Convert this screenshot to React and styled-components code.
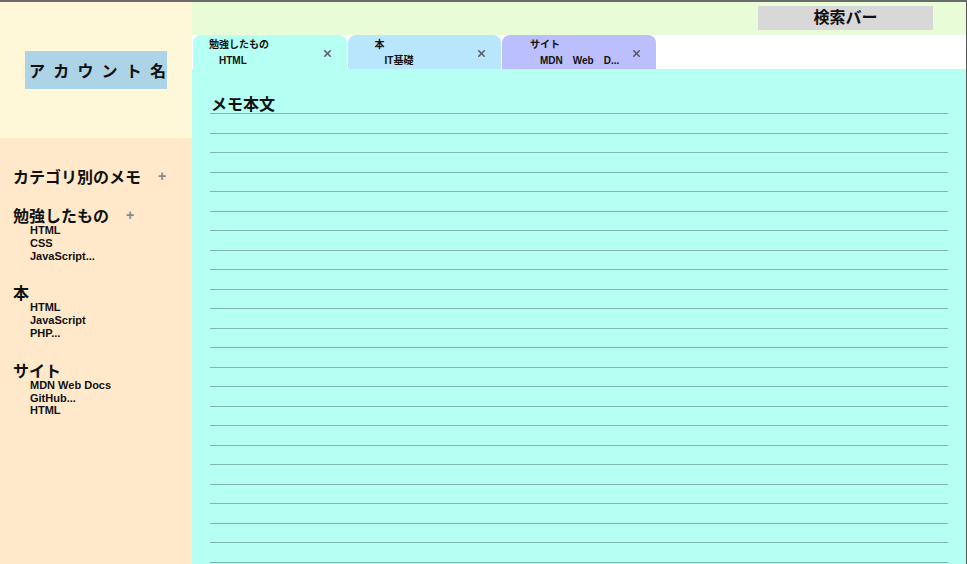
import React from "react";
import styled, { createGlobalStyle } from "styled-components";
import { X } from "lucide-react";

const GlobalStyle = createGlobalStyle`
  html, body, #root {
    height: 100%;
    margin: 0;
  }
  body {
    font-family: "Liberation Sans", "Noto Sans CJK JP", sans-serif;
    color: #111;
  }
`;

const tabs = [
  { title: "勉強したもの", sub: "HTML", color: "#b5fff3", inset: 16 },
  { title: "本", sub: "IT基礎", color: "#b9e6fd", inset: 27 },
  { title: "サイト", sub: "MDN　Web　D...", color: "#bbbffd", inset: 28 },
];

const categories = [
  { name: "勉強したもの", plus: true, items: ["HTML", "CSS", "JavaScript..."] },
  { name: "本", items: ["HTML", "JavaScript", "PHP..."] },
  { name: "サイト", items: ["MDN Web Docs", "GitHub...", "HTML"] },
];

const App = () => {
  const lines = Array.from({ length: 24 });

  return (
    <>
      <GlobalStyle />
      <Layout>
        <Sidebar>
          <Account>
            <AccountName>
              {"アカウント名".split("").map((ch, i) => (
                <span key={i}>{ch}</span>
              ))}
            </AccountName>
          </Account>
          <Categories>
            <Heading>
              カテゴリ別のメモ<Plus>+</Plus>
            </Heading>
            {categories.map((c) => (
              <Group key={c.name}>
                <Heading>
                  {c.name}
                  {c.plus && <Plus>+</Plus>}
                </Heading>
                {c.items.map((item) => (
                  <Item key={item}>{item}</Item>
                ))}
              </Group>
            ))}
          </Categories>
        </Sidebar>

        <Main>
          <Header>
            <Search>検索バー</Search>
          </Header>
          <TabBar>
            {tabs.map((t) => (
              <Tab key={t.title} $bg={t.color} $inset={t.inset}>
                <TabText>
                  <TabTitle>{t.title}</TabTitle>
                  <TabSub>{t.sub}</TabSub>
                </TabText>
                <Close>
                  <X size={11} strokeWidth={3.5} />
                </Close>
              </Tab>
            ))}
          </TabBar>
          <Memo>
            <MemoTitle>メモ本文</MemoTitle>
            {lines.map((_, i) => (
              <Line key={i} />
            ))}
          </Memo>
        </Main>
      </Layout>
    </>
  );
};

export default App;

const Layout = styled.div`
  height: 100%;
  box-sizing: border-box;
  display: grid;
  grid-template-columns: 192px 1fr;
  border-top: 2px solid #6b6b6b;
  border-right: 1px solid #555;
  overflow: hidden;
`;

const Sidebar = styled.aside`
  display: flex;
  flex-direction: column;
  background: #ffe9ca;
`;

const Account = styled.div`
  height: 136px;
  background: #fff8d8;
  display: flex;
  align-items: center;
  justify-content: center;
`;

const AccountName = styled.div`
  width: 142px;
  height: 38px;
  box-sizing: border-box;
  padding: 0 1px 0 4px;
  background: #acd3e6;
  display: flex;
  align-items: center;
  justify-content: space-between;
  font-family: "Noto Sans CJK JP", sans-serif;
  font-size: 16px;
  font-weight: 700;
`;

const Categories = styled.div`
  padding: 29px 0 0 13px;
  display: flex;
  flex-direction: column;
  gap: 21px;
`;

const Heading = styled.div`
  font-family: "Noto Sans CJK JP", sans-serif;
  font-size: 16px;
  font-weight: 700;
  line-height: 18px;
  display: flex;
  align-items: center;
`;

const Plus = styled.span`
  margin-left: 17px;
  color: #8a8a8a;
  font-family: "Liberation Sans", sans-serif;
  font-size: 14px;
  font-weight: 700;
`;

const Group = styled.div`
  display: flex;
  flex-direction: column;
`;

const Item = styled.div`
  padding-left: 17px;
  font-size: 11px;
  font-weight: 700;
  line-height: 12.8px;
`;

const Main = styled.main`
  display: flex;
  flex-direction: column;
  min-width: 0;
`;

const Header = styled.header`
  height: 33px;
  background: #e8fcd8;
  display: flex;
  justify-content: flex-end;
  align-items: flex-start;
  padding: 4px 33px 0 0;
  box-sizing: border-box;
`;

const Search = styled.div`
  width: 175px;
  height: 24px;
  background: #d8d8d8;
  display: flex;
  align-items: center;
  justify-content: center;
  padding-bottom: 4px;
  box-sizing: border-box;
  font-family: "Noto Sans CJK JP", sans-serif;
  font-size: 16px;
  font-weight: 700;
`;

const TabBar = styled.nav`
  height: 34px;
  display: flex;
  background: #fff;
  padding-left: 1px;
`;

const Tab = styled.div`
  width: 153.5px;
  margin-right: 1px;
  background: ${(p) => p.$bg};
  border-radius: 8px 8px 0 0;
  display: flex;
  align-items: center;
  padding-left: ${(p) => p.$inset}px;
  padding-right: 14px;
  box-sizing: border-box;
`;

const TabText = styled.div`
  flex: 1;
  display: flex;
  flex-direction: column;
  gap: 5px;
`;

const TabTitle = styled.span`
  font-family: "Noto Sans CJK JP", sans-serif;
  font-size: 10px;
  font-weight: 700;
  line-height: 12px;
`;

const TabSub = styled.span`
  padding-left: 10px;
  font-size: 10px;
  font-weight: 700;
  line-height: 12px;
  white-space: pre;
`;

const Close = styled.span`
  display: flex;
  color: #5b5b6b;
  margin-top: 2px;
`;

const Memo = styled.section`
  flex: 1;
  background: #b5fff3;
  padding: 24px 18px 0 18px;
`;

const MemoTitle = styled.div`
  font-family: "Noto Sans CJK JP", sans-serif;
  font-size: 16px;
  font-weight: 700;
  line-height: 20px;
  padding-left: 1px;
  border-bottom: 1px solid #7fb6b1;
`;

const Line = styled.div`
  height: 18.5px;
  border-bottom: 1px solid #7fb6b1;
`;
